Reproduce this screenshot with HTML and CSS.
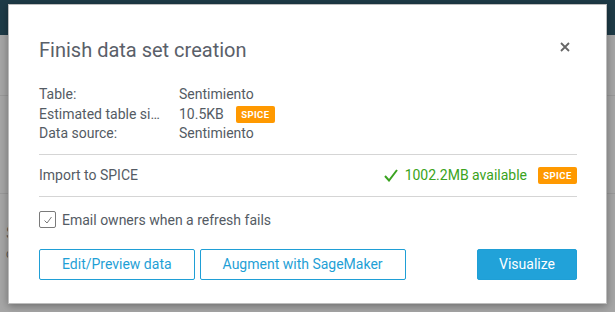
FILE: index.html
```html
<!DOCTYPE html>
<html lang="en">
<head>
    <meta charset="UTF-8">
    <title>Finish data set creation</title>
    <link rel="stylesheet" href="styles.css">
</head>
<body>

    <div class="topbar"></div>
    <div class="page">
        <div class="page-row"></div>
        <div class="page-row"></div>
        <div class="page-card">
            <div class="page-title">S</div>
            <div class="page-sub">c</div>
        </div>
    </div>

    <div class="modal">
        <div class="modal-head">
            <h1>Finish data set creation</h1>
            <svg class="close" width="10" height="10" viewBox="0 0 10 10">
                <path d="M1 1 L9 9 M9 1 L1 9" stroke="#666" stroke-width="1.8" fill="none"/>
            </svg>
        </div>

        <div class="info">
            <div class="label">Table:</div>
            <div class="value">Sentimiento</div>
            <div class="label">Estimated table si…</div>
            <div class="value">10.5KB <span class="spice">SPICE</span></div>
            <div class="label">Data source:</div>
            <div class="value">Sentimiento</div>
        </div>

        <div class="import-row">
            <span>Import to SPICE</span>
            <span class="available">
                <svg width="14" height="13" viewBox="0 0 14 13">
                    <path d="M1 7 L5 11.5 L13 1" stroke="#3aa320" stroke-width="2" fill="none"/>
                </svg>
                1002.2MB available
                <span class="spice">SPICE</span>
            </span>
        </div>

        <label class="check-row">
            <span class="checkbox">
                <svg width="14" height="14" viewBox="0 0 14 14">
                    <path d="M3.5 7.5 L6 10 L10.5 4" stroke="#777" stroke-width="1" fill="none"/>
                </svg>
            </span>
            Email owners when a refresh fails
        </label>

        <div class="actions">
            <button class="btn">Edit/Preview data</button>
            <button class="btn">Augment with SageMaker</button>
            <button class="btn primary">Visualize</button>
        </div>
    </div>

</body>
</html>
```

FILE: styles.css
```css
body {
    margin: 0;
    background: #a6a6a6;
    font-family: Roboto, "Liberation Sans", sans-serif;
    color: #545b64;
}
.topbar {
    height: 35px;
    background: #1e3b47;
}
.page {
    padding-top: 60px;
}
.page-row {
    height: 97px;
    border-top: 1px solid #999;
}
.page-row + .page-row {
    height: 0;
}
.page-card {
    padding: 28px 6px;
    color: #555;
    font-size: 18px;
}
.page-sub {
    font-size: 12px;
    margin-top: 4px;
}
.modal {
    position: absolute;
    left: 8px;
    top: 4px;
    width: 599px;
    height: 300px;
    box-sizing: border-box;
    background: #fff;
    border: 1px solid #bdbdbd;
    box-shadow: 0 2px 8px rgba(0, 0, 0, 0.35);
    padding: 31px 29px 0 30px;
}
.modal-head {
    display: flex;
    justify-content: space-between;
    align-items: center;
    padding-right: 7px;
}
h1 {
    margin: 0;
    font-size: 20px;
    line-height: 28px;
    font-weight: 400;
    color: #5a6069;
}
.close {
    margin-top: -6px;
}
.info {
    display: grid;
    grid-template-columns: 140px 1fr;
    font-size: 14px;
    line-height: 19.5px;
    margin-top: 21px;
    padding-bottom: 10px;
    border-bottom: 1px solid #d5d5d5;
}
.value {
    display: flex;
    align-items: center;
}
.spice {
    display: inline-block;
    background: #ff9900;
    color: #fff;
    font-size: 9.5px;
    font-weight: 700;
    letter-spacing: 0.4px;
    line-height: 17px;
    width: 39px;
    text-align: center;
    border-radius: 2px;
    margin-left: 12px;
}
.import-row {
    display: flex;
    justify-content: space-between;
    align-items: center;
    height: 41px;
    font-size: 14px;
    border-bottom: 1px solid #d5d5d5;
}
.available {
    display: flex;
    align-items: center;
    color: #3aa320;
}
.available svg {
    margin-right: 7px;
}
.available .spice {
    margin-left: 11px;
}
.check-row {
    display: flex;
    align-items: center;
    gap: 6px;
    font-size: 14px;
    line-height: 20px;
    margin-top: 13px;
}
.checkbox {
    width: 15px;
    height: 15px;
    border: 1px solid #7a7a7a;
    border-radius: 2px;
    display: flex;
    align-items: center;
    justify-content: center;
}
.actions {
    display: flex;
    gap: 5px;
    margin-top: 19px;
}
.btn {
    height: 31px;
    padding: 0 22px;
    background: #fff;
    color: #1f9fd6;
    border: 1px solid #1f9fd6;
    border-radius: 2px;
    font-family: inherit;
    font-size: 14px;
}
.primary {
    margin-left: auto;
    background: #21a2d9;
    color: #fff;
    width: 100px;
    padding: 0;
}
```
